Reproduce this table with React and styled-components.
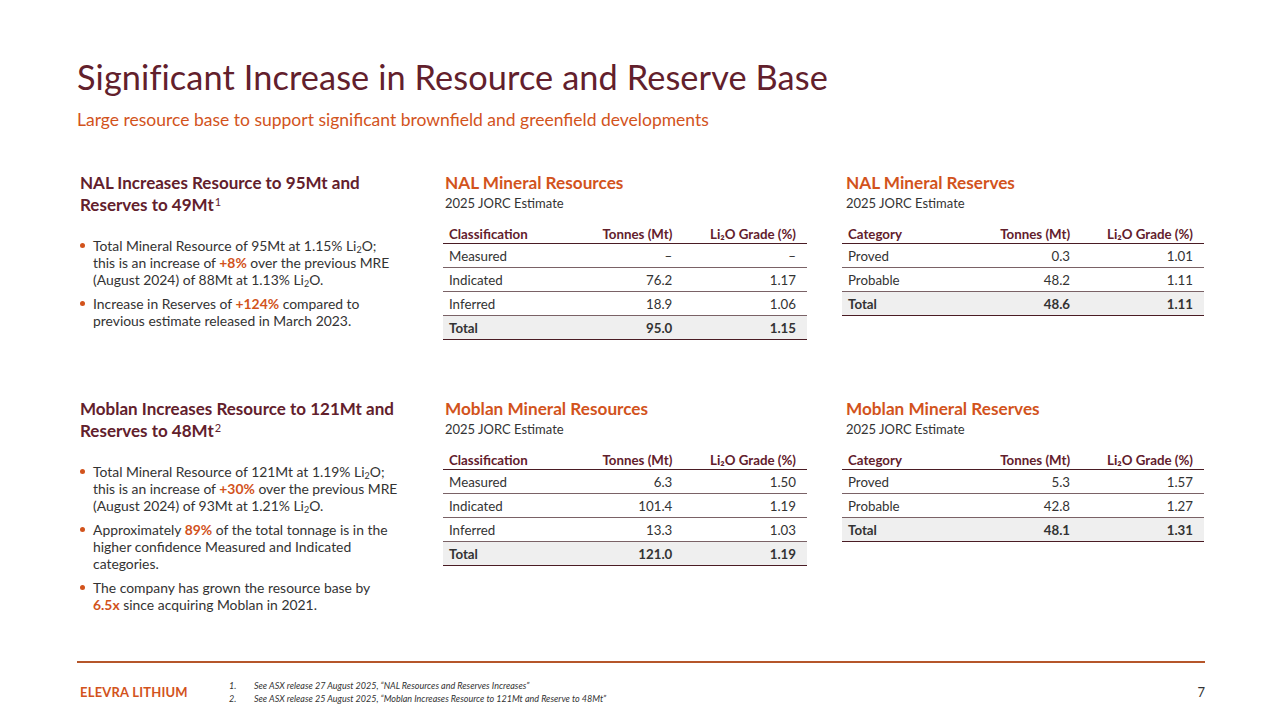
import React from 'react';
import styled, { createGlobalStyle } from 'styled-components';

const GlobalStyle = createGlobalStyle`
  html, body {
    margin: 0;
    padding: 0;
    background: #ffffff;
  }
  body {
    font-family: Lato, "Open Sans", "Liberation Sans", sans-serif;
    color: #333333;
  }
`;

const MAROON = '#62202c';
const ORANGE = '#d2531c';

const Slide = styled.div`
  width: 1280px;
  height: 720px;
  box-sizing: border-box;
  padding: 57px 75px 0 77px;
  display: flex;
  flex-direction: column;
`;

const Title = styled.h1`
  margin: 0;
  font-size: 34.3px;
  font-weight: 400;
  line-height: 40px;
  color: ${MAROON};
  letter-spacing: 0.1px;
`;

const Subtitle = styled.p`
  margin: 12px 0 0;
  font-size: 17.5px;
  line-height: 22px;
  color: ${ORANGE};
`;

const Grid = styled.div`
  margin-top: 41px;
  display: grid;
  grid-template-columns: 332px 364px 363px;
  grid-template-rows: 226px 240px;
  column-gap: 34px;
`;

const Intro = styled.div`
  padding-left: 3px;
`;

const IntroTitle = styled.h2`
  margin: 0;
  font-size: 17px;
  font-weight: 700;
  line-height: 22px;
  color: ${MAROON};
  white-space: nowrap;

  sup {
    font-size: 11px;
    font-weight: 400;
    vertical-align: top;
    position: relative;
    top: -3px;
    margin-left: 1px;
  }
`;

const Bullets = styled.ul`
  list-style: none;
  margin: 21px 0 0;
  padding: 0;
  width: 345px;
  display: grid;
  gap: 7px;
`;

const Bullet = styled.li`
  display: flex;
  gap: 8px;
  font-size: 13.9px;
  line-height: 17px;
  color: #333333;

  &::before {
    content: '';
    flex: 0 0 5px;
    height: 5px;
    margin-top: 6px;
    border-radius: 50%;
    background: ${ORANGE};
  }

  sub {
    font-size: 9px;
    vertical-align: -2px;
    line-height: 0;
  }
`;

const Hl = styled.b`
  color: ${ORANGE};
  font-weight: 700;
`;

const Block = styled.div`
  margin-left: ${(p) => p.$shift || 0}px;
`;

const BlockTitle = styled.h3`
  margin: 0 0 0 ${(p) => p.$indent || 2}px;
  font-size: 17.2px;
  font-weight: 700;
  line-height: 21px;
  color: ${ORANGE};
`;

const BlockSub = styled.p`
  margin: 0 0 0 ${(p) => p.$indent || 2}px;
  font-size: 13px;
  line-height: 21px;
  color: #333333;
`;

const Table = styled.table`
  margin-top: 12px;
  width: 100%;
  border-collapse: collapse;
  font-size: 13.3px;
`;

const Th = styled.th`
  padding: 0 ${(p) => p.$pr || 0}px 1px ${(p) => p.$pl || 0}px;
  height: 15px;
  text-align: ${(p) => p.$align || 'left'};
  font-weight: 700;
  color: ${MAROON};
  border-bottom: 1.5px solid #4a1c24;
  vertical-align: bottom;
  white-space: nowrap;
`;

const Td = styled.td`
  padding: 0 ${(p) => p.$pr || 0}px 0 ${(p) => p.$pl || 0}px;
  height: 23px;
  text-align: ${(p) => p.$align || 'left'};
  font-weight: ${(p) => (p.$total ? 700 : 400)};
  color: #333333;
  background: ${(p) => (p.$total ? '#efefef' : 'transparent')};
  border-bottom: ${(p) => (p.$total ? '1.5px solid #4a1c24' : '1.5px solid #7a6266')};
`;

const Footer = styled.div`
  margin-top: auto;
  height: 57px;
  border-top: 2px solid #b5562a;
  display: grid;
  grid-template-columns: 152px 1fr auto;
  align-items: center;
`;

const Brand = styled.div`
  padding-left: 3px;
  font-size: 13px;
  font-weight: 700;
  color: ${ORANGE};
  letter-spacing: 0.2px;
  margin-top: 1px;
`;

const Notes = styled.ol`
  margin: 2px 0 0;
  padding: 0;
  list-style: none;
  display: grid;
  gap: 1px;
`;

const Note = styled.li`
  display: flex;
  font-size: 9px;
  font-style: italic;
  line-height: 12px;
  color: #333333;

  span {
    width: 25px;
  }
`;

const PageNo = styled.div`
  font-size: 13px;
  color: #333333;
`;

function DataTable({ headers, rows }) {
  const pads = [
    { $align: 'left', $pl: 6 },
    { $align: 'right', $pr: 0 },
    { $align: 'right', $pr: 11 },
  ];
  return (
    <Table>
      <colgroup>
        <col style={{ width: '40%' }} />
        <col style={{ width: '23%' }} />
        <col />
      </colgroup>
      <thead>
        <tr>
          {headers.map((h, i) => (
            <Th key={h} {...pads[i]}>
              {h}
            </Th>
          ))}
        </tr>
      </thead>
      <tbody>
        {rows.map((r, ri) => {
          const total = ri === rows.length - 1;
          return (
            <tr key={r[0]}>
              {r.map((c, i) => (
                <Td key={i} {...pads[i]} $total={total}>
                  {c}
                </Td>
              ))}
            </tr>
          );
        })}
      </tbody>
    </Table>
  );
}

const resHead = ['Classification', 'Tonnes (Mt)', 'Li\u2082O Grade (%)'];
const resvHead = ['Category', 'Tonnes (Mt)', 'Li\u2082O Grade (%)'];

const nalRes = [
  ['Measured', '\u2013', '\u2013'],
  ['Indicated', '76.2', '1.17'],
  ['Inferred', '18.9', '1.06'],
  ['Total', '95.0', '1.15'],
];
const nalResv = [
  ['Proved', '0.3', '1.01'],
  ['Probable', '48.2', '1.11'],
  ['Total', '48.6', '1.11'],
];
const mobRes = [
  ['Measured', '6.3', '1.50'],
  ['Indicated', '101.4', '1.19'],
  ['Inferred', '13.3', '1.03'],
  ['Total', '121.0', '1.19'],
];
const mobResv = [
  ['Proved', '5.3', '1.57'],
  ['Probable', '42.8', '1.27'],
  ['Total', '48.1', '1.31'],
];

const Li2O = () => (
  <>
    Li<sub>2</sub>O
  </>
);

export default function App() {
  return (
    <>
      <GlobalStyle />
      <Slide>
        <Title>Significant Increase in Resource and Reserve Base</Title>
        <Subtitle>Large resource base to support significant brownfield and greenfield developments</Subtitle>

        <Grid>
          <Intro>
            <IntroTitle>
              NAL Increases Resource to 95Mt and
              <br />
              Reserves to 49Mt<sup>1</sup>
            </IntroTitle>
            <Bullets>
              <Bullet>
                <div>
                  Total Mineral Resource of 95Mt at 1.15% <Li2O />;
                  <br />
                  this is an increase of <Hl>+8%</Hl> over the previous MRE
                  <br />
                  (August 2024) of 88Mt at 1.13% <Li2O />.
                </div>
              </Bullet>
              <Bullet>
                <div>
                  Increase in Reserves of <Hl>+124%</Hl> compared to
                  <br />
                  previous estimate released in March 2023.
                </div>
              </Bullet>
            </Bullets>
          </Intro>

          <Block>
            <BlockTitle>NAL Mineral Resources</BlockTitle>
            <BlockSub>2025 JORC Estimate</BlockSub>
            <DataTable headers={resHead} rows={nalRes} />
          </Block>

          <Block $shift={1}>
            <BlockTitle $indent={4}>NAL Mineral Reserves</BlockTitle>
            <BlockSub $indent={4}>2025 JORC Estimate</BlockSub>
            <DataTable headers={resvHead} rows={nalResv} />
          </Block>

          <Intro>
            <IntroTitle>
              Moblan Increases Resource to 121Mt and
              <br />
              Reserves to 48Mt<sup>2</sup>
            </IntroTitle>
            <Bullets>
              <Bullet>
                <div>
                  Total Mineral Resource of 121Mt at 1.19% <Li2O />;
                  <br />
                  this is an increase of <Hl>+30%</Hl> over the previous MRE
                  <br />
                  (August 2024) of 93Mt at 1.21% <Li2O />.
                </div>
              </Bullet>
              <Bullet>
                <div>
                  Approximately <Hl>89%</Hl> of the total tonnage is in the
                  <br />
                  higher confidence Measured and Indicated
                  <br />
                  categories.
                </div>
              </Bullet>
              <Bullet>
                <div>
                  The company has grown the resource base by
                  <br />
                  <Hl>6.5x</Hl> since acquiring Moblan in 2021.
                </div>
              </Bullet>
            </Bullets>
          </Intro>

          <Block>
            <BlockTitle>Moblan Mineral Resources</BlockTitle>
            <BlockSub>2025 JORC Estimate</BlockSub>
            <DataTable headers={resHead} rows={mobRes} />
          </Block>

          <Block $shift={1}>
            <BlockTitle $indent={4}>Moblan Mineral Reserves</BlockTitle>
            <BlockSub $indent={4}>2025 JORC Estimate</BlockSub>
            <DataTable headers={resvHead} rows={mobResv} />
          </Block>
        </Grid>

        <Footer>
          <Brand>ELEVRA LITHIUM</Brand>
          <Notes>
            <Note>
              <span>1.</span>See ASX release 27 August 2025, “NAL Resources and Reserves Increases”
            </Note>
            <Note>
              <span>2.</span>See ASX release 25 August 2025, “Moblan Increases Resource to 121Mt and Reserve to 48Mt”
            </Note>
          </Notes>
          <PageNo>7</PageNo>
        </Footer>
      </Slide>
    </>
  );
}
